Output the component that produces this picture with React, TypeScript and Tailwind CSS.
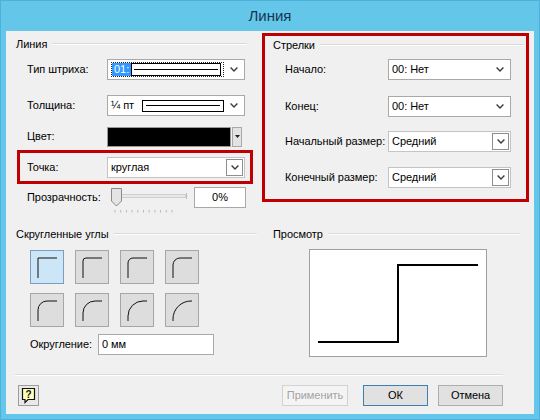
import type { ReactNode } from 'react'

// ── small drawing bits ─────────────────────────────────
function Chevron() {
  return (
    <svg width="8" height="5" viewBox="0 0 8 5" className="shrink-0">
      <path d="M0.6 0.6 L4 4 L7.4 0.6" fill="none" stroke="#3c3c3c" strokeWidth="1.4" />
    </svg>
  )
}

function GroupHeader({ title, lineEnd = 0 }: { title: string; lineEnd?: number }) {
  return (
    <div className="flex items-center h-[14px]">
      <span className="leading-none whitespace-nowrap">{title}</span>
      <div
        className="flex-1 ml-[5px] h-[2px] border-t border-[#dadada] border-b border-b-white"
        style={{ marginRight: lineEnd }}
      />
    </div>
  )
}

// plain dropdown, chevron sits straight on the white field
function Combo({ width, children }: { width: number; children: ReactNode }) {
  return (
    <div
      className="h-[21px] bg-white border border-[#a9a9a9] flex items-center pl-[3px] pr-[6px] shrink-0"
      style={{ width }}
    >
      <div className="flex-1 flex items-center min-w-0 whitespace-nowrap">{children}</div>
      <Chevron />
    </div>
  )
}

// dropdown with its own little bordered button
function ComboBtn({ width, children }: { width: number; children: ReactNode }) {
  return (
    <div
      className="h-[21px] bg-white border border-[#c4c4c4] flex items-center pl-[3px] pr-[1px] shrink-0"
      style={{ width }}
    >
      <div className="flex-1 flex items-center min-w-0 whitespace-nowrap">{children}</div>
      <div className="w-[17px] h-[17px] border border-[#8f8f8f] bg-white flex items-center justify-center">
        <Chevron />
      </div>
    </div>
  )
}

function Row({ label, labelW, children, className = '' }: { label: string; labelW: number; children: ReactNode; className?: string }) {
  return (
    <div className={`flex items-center h-[21px] ${className}`}>
      <span className="shrink-0 whitespace-nowrap" style={{ width: labelW }}>{label}</span>
      {children}
    </div>
  )
}

// ── corner style buttons ───────────────────────────────
const RADII = [0, 3, 5, 7, 9, 12, 15, 18]

function CornerButton({ r, active }: { r: number; active: boolean }) {
  const d = r === 0 ? 'M7 27 V7 H26' : `M7 27 V${7 + r} A${r} ${r} 0 0 1 ${7 + r} 7 H26`
  return (
    <div
      className={
        active
          ? 'w-[34px] h-[34px] bg-[#cde6f7] border border-[#7a9ebf]'
          : 'w-[34px] h-[34px] bg-[#dddddd] border border-[#a6a6a6]'
      }
    >
      <svg width="32" height="32" viewBox="0 0 32 32">
        <path d={d} fill="none" stroke="#111" strokeWidth="1" />
      </svg>
    </div>
  )
}

function Slider() {
  const ticks = Array.from({ length: 11 }, (_, i) => 4 + i * 5.7)
  return (
    <svg width="78" height="26" viewBox="0 0 78 26" className="self-start mt-[1px] shrink-0 overflow-visible">
      <rect x="10.5" y="6.5" width="64" height="3" fill="#e8e8e8" stroke="#cfcfcf" />
      <line x1="75.5" y1="5" x2="75.5" y2="11" stroke="#bdbdbd" />
      <path d="M0.5 0.5 H10.5 V13 L5.5 18 L0.5 13 Z" fill="#e4e4e4" stroke="#8a8a8a" />
      {ticks.map((x) => (
        <line key={x} x1={x} y1="22" x2={x} y2="24.5" stroke="#b5b5b5" />
      ))}
    </svg>
  )
}

function HelpIcon() {
  return (
    <div className="w-[21px] h-[21px] border border-[#9c9c9c] bg-[#e9e9e9] flex items-center justify-center">
      <svg width="17" height="17" viewBox="0 0 17 17">
        <path d="M2.5 1.5 H14.5 V12.5 H8 L5 15.5 V12.5 H2.5 Z" fill="#ffffb8" stroke="#111" strokeWidth="1.2" />
        <text x="8.5" y="11" textAnchor="middle" fontSize="10" fontWeight="700" fontFamily="Liberation Sans, sans-serif" fill="#111">?</text>
      </svg>
    </div>
  )
}

export default function App() {
  return (
    <div className="w-[540px] h-[420px] bg-[#64c7ea] border border-[#4eb1dc] px-[5px] pb-[5px] flex flex-col font-['Liberation_Sans',Arial,sans-serif] text-[11px] tracking-[-0.05px] text-black">
      {/* title bar */}
      <div className="h-[30px] flex items-center justify-center text-[15px] tracking-normal text-[#17344f]">Линия</div>

      {/* client area */}
      <div className="flex-1 bg-[#f0f0f0] flex flex-col pt-[2px]">
        {/* ── top: line settings + arrows ── */}
        <div className="flex pl-[11px]">
          <div className="w-[236px] flex flex-col">
            <div className="mt-[4px] -ml-[1px]">
              <GroupHeader title="Линия" lineEnd={6} />
            </div>

            <Row label="Тип штриха:" labelW={80} className="mt-[8px] pl-[10px]">
              <Combo width={138}>
                <div className="flex-1 flex items-center h-[15px] border border-dotted border-[#222] pr-[2px] mr-[6px]">
                  <span className="shrink-0 bg-[#3399ff] text-white leading-[13px] px-[2px]">01:</span>
                  <div className="flex-1 h-[13px] border border-black flex items-center px-[2px]">
                    <div className="w-full h-[1px] bg-black" />
                  </div>
                </div>
              </Combo>
            </Row>

            <Row label="Толщина:" labelW={80} className="mt-[15px] pl-[10px]">
              <Combo width={138}>
                <span className="mr-[8px]">¼ пт</span>
                <div className="w-[82px] h-[12px] border border-black flex items-center px-[3px]">
                  <div className="w-full h-[1px] bg-black" />
                </div>
              </Combo>
            </Row>

            <Row label="Цвет:" labelW={80} className="mt-[10px] pl-[10px]">
              <div className="w-[138px] h-[20px] flex items-stretch">
                <div className="w-[124px] bg-black border border-[#9a9a9a]" />
                <div className="ml-[1px] w-[10px] bg-[#e3e3e3] border border-[#a9a9a9] flex items-center justify-center">
                  <svg width="5" height="3" viewBox="0 0 5 3"><path d="M0 0 H5 L2.5 3 Z" fill="#222" /></svg>
                </div>
              </div>
            </Row>

            {/* highlighted point row */}
            <div className="mt-[3px] h-[34px] border-[3px] border-[#c00000] flex items-center pl-[7px]">
              <Row label="Точка:" labelW={80}>
                <ComboBtn width={138}>круглая</ComboBtn>
              </Row>
            </div>

            <div className="mt-[3px] flex items-center h-[21px] pl-[10px]">
              <span className="w-[84px] shrink-0 whitespace-nowrap">Прозрачность:</span>
              <Slider />
              <div className="ml-[5px] w-[52px] h-[21px] bg-white border border-[#a9a9a9] flex items-center justify-center">
                0%
              </div>
            </div>
          </div>

          {/* arrows, framed in red */}
          <div className="ml-[9px] w-[267px] h-[169px] border-[3px] border-[#c00000] flex flex-col">
            <div className="mt-[2px] pl-[8px] pr-[2px]">
              <GroupHeader title="Стрелки" />
            </div>
            <Row label="Начало:" labelW={103} className="mt-[7px] pl-[20px]">
              <Combo width={123}>00: Нет</Combo>
            </Row>
            <Row label="Конец:" labelW={103} className="mt-[16px] pl-[20px]">
              <Combo width={123}>00: Нет</Combo>
            </Row>
            <Row label="Начальный размер:" labelW={103} className="mt-[14px] pl-[20px]">
              <ComboBtn width={123}>Средний</ComboBtn>
            </Row>
            <Row label="Конечный размер:" labelW={103} className="mt-[15px] pl-[20px]">
              <ComboBtn width={123}>Средний</ComboBtn>
            </Row>
          </div>
        </div>

        {/* ── bottom: rounding + preview ── */}
        <div className="flex pl-[10px] mt-[19px]">
          <div className="w-[241px] flex flex-col">
            <GroupHeader title="Скругленные углы" />
            <div className="mt-[9px] pl-[14px] grid grid-cols-[repeat(4,34px)] gap-x-[11px] gap-y-[9px]">
              {RADII.map((r, i) => (
                <CornerButton key={r} r={r} active={i === 0} />
              ))}
            </div>
            <Row label="Округление:" labelW={68} className="mt-[7px] pl-[14px]">
              <div className="w-[116px] h-[21px] bg-white border border-[#a9a9a9] flex items-center pl-[3px]">0 мм</div>
            </Row>
          </div>

          <div className="ml-[16px] w-[247px] flex flex-col">
            <GroupHeader title="Просмотр" />
            <div className="mt-[8px] ml-[36px] w-[178px] h-[108px] bg-white border border-[#a0a0a0]">
              <svg width="176" height="106" viewBox="0 0 176 106">
                <path d="M8 92 H88 V15 H168" fill="none" stroke="#000" strokeWidth="2" />
              </svg>
            </div>
          </div>
        </div>

        {/* ── footer ── */}
        <div className="mt-auto flex flex-col">
          <div className="ml-[9px] w-[488px] border-t border-[#dcdcdc] border-b border-b-white" />
          <div className="mt-[9px] mb-[8px] h-[21px] flex items-center pl-[12px] pr-[31px]">
            <HelpIcon />
            <div className="flex-1" />
            <div className="w-[66px] h-[21px] bg-[#f4f4f4] border border-[#d2d2d2] text-[#a3a3a3] flex items-center justify-center">
              Применить
            </div>
            <div className="ml-[15px] w-[65px] h-[21px] bg-[#e1e1e1] border border-[#3c7fb1] flex items-center justify-center">
              ОК
            </div>
            <div className="ml-[10px] w-[65px] h-[21px] bg-[#e1e1e1] border border-[#adadad] flex items-center justify-center">
              Отмена
            </div>
          </div>
        </div>
      </div>
    </div>
  )
}
